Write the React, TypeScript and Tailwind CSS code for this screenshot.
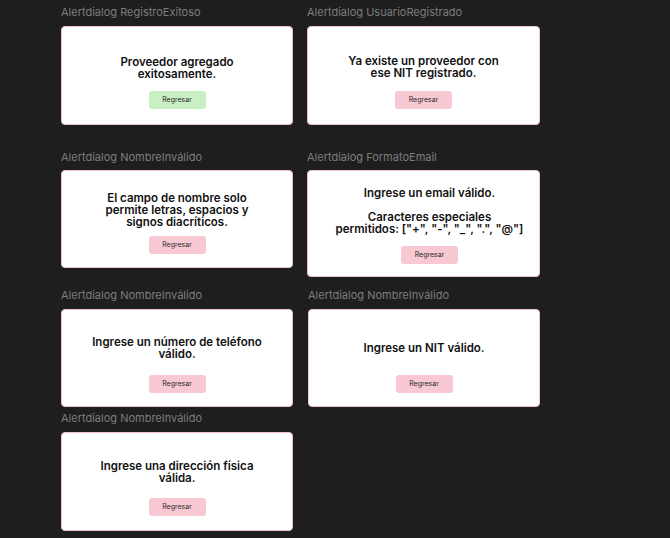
import React from "react";

type CardProps = {
  lines: string[];
  variant?: "green" | "pink";
  h: string;
  pt: string;
  gap: string;
  extra?: string;
};

function Btn({ variant = "pink" }: { variant?: "green" | "pink" }) {
  return (
    <div
      className={
        "w-[57px] h-[18px] rounded-[3px] flex items-center justify-center text-[7px] leading-[8px] text-[#2a2a2a] " +
        (variant === "green" ? "bg-[#c9f0c4]" : "bg-[#f8c8d3]")
      }
    >
      Regresar
    </div>
  );
}

function Card({ lines, variant, h, pt, gap, extra = "" }: CardProps) {
  return (
    <div
      className={
        "bg-white border border-[#f0c3cd] rounded-[4px] flex flex-col items-center " +
        h +
        " " +
        pt +
        " " +
        extra
      }
    >
      <div className="text-center text-[11.5px] leading-[12px] font-semibold text-[#111111] whitespace-nowrap">
        {lines.map((l, i) => (
          <div key={i} className="h-[12px]">
            {l}
          </div>
        ))}
      </div>
      <div className={gap} />
      <Btn variant={variant} />
    </div>
  );
}

function Label({ children }: { children: React.ReactNode }) {
  return (
    <div className="text-[11px] leading-[14px] text-[#7d7d7d] whitespace-nowrap">
      {children}
    </div>
  );
}

export default function App() {
  return (
    <div
      className="w-[670px] h-[538px] bg-[#1e1e1e] overflow-hidden pl-[61px] pt-[5px]"
      style={{ fontFamily: "Inter, 'Noto Sans', sans-serif" }}
    >
      {/* Row 1 */}
      <div className="grid grid-cols-[232px_233px] gap-x-[14px] items-start">
        <div className="flex flex-col gap-[7px]">
          <Label>Alertdialog RegistroExitoso</Label>
          <Card
            lines={["Proveedor agregado", "exitosamente."]}
            variant="green"
            h="h-[99px]"
            pt="pt-[29px]"
            gap="h-[11px]"
          />
        </div>
        <div className="flex flex-col gap-[7px]">
          <Label>Alertdialog UsuarioRegistrado</Label>
          <Card
            lines={["Ya existe un proveedor con", "ese NIT registrado."]}
            h="h-[99px]"
            pt="pt-[28px]"
            gap="h-[12px]"
          />
        </div>
      </div>

      {/* Row 2 */}
      <div className="grid grid-cols-[232px_233px] gap-x-[14px] items-start mt-[25px]">
        <div className="flex flex-col gap-[6px]">
          <Label>Alertdialog NombreInválido</Label>
          <Card
            lines={["El campo de nombre solo", "permite letras, espacios y", "signos diacríticos."]}
            h="h-[98px]"
            pt="pt-[21px]"
            gap="h-[8px]"
          />
        </div>
        <div className="flex flex-col gap-[6px]">
          <Label>Alertdialog FormatoEmail</Label>
          <Card
            lines={[
              "Ingrese un email válido.",
              "\u00a0",
              "Caracteres especiales",
              'permitidos: ["+", "-", "_", ".", "@"]',
            ]}
            h="h-[107px]"
            pt="pt-[16px]"
            gap="h-[11px]"
            extra="pl-[12px]"
          />
        </div>
      </div>

      {/* Row 3 */}
      <div className="grid grid-cols-[232px_233px] gap-x-[14px] items-start mt-[11px]">
        <div className="flex flex-col gap-[7px]">
          <Label>Alertdialog NombreInválido</Label>
          <Card
            lines={["Ingrese un número de teléfono", "válido."]}
            h="h-[98px]"
            pt="pt-[26px]"
            gap="h-[15px]"
          />
        </div>
        <div className="flex flex-col gap-[7px] pl-[1px]">
          <Label>Alertdialog NombreInválido</Label>
          <Card
            lines={["Ingrese un NIT válido."]}
            h="h-[98px]"
            pt="pt-[32px]"
            gap="h-[21px]"
          />
        </div>
      </div>

      {/* Row 4 */}
      <div className="grid grid-cols-[232px_233px] gap-x-[14px] items-start mt-[4px]">
        <div className="flex flex-col gap-[7px]">
          <Label>Alertdialog NombreInválido</Label>
          <Card
            lines={["Ingrese una dirección física", "válida."]}
            h="h-[99px]"
            pt="pt-[27px]"
            gap="h-[14px]"
          />
        </div>
      </div>
    </div>
  );
}
